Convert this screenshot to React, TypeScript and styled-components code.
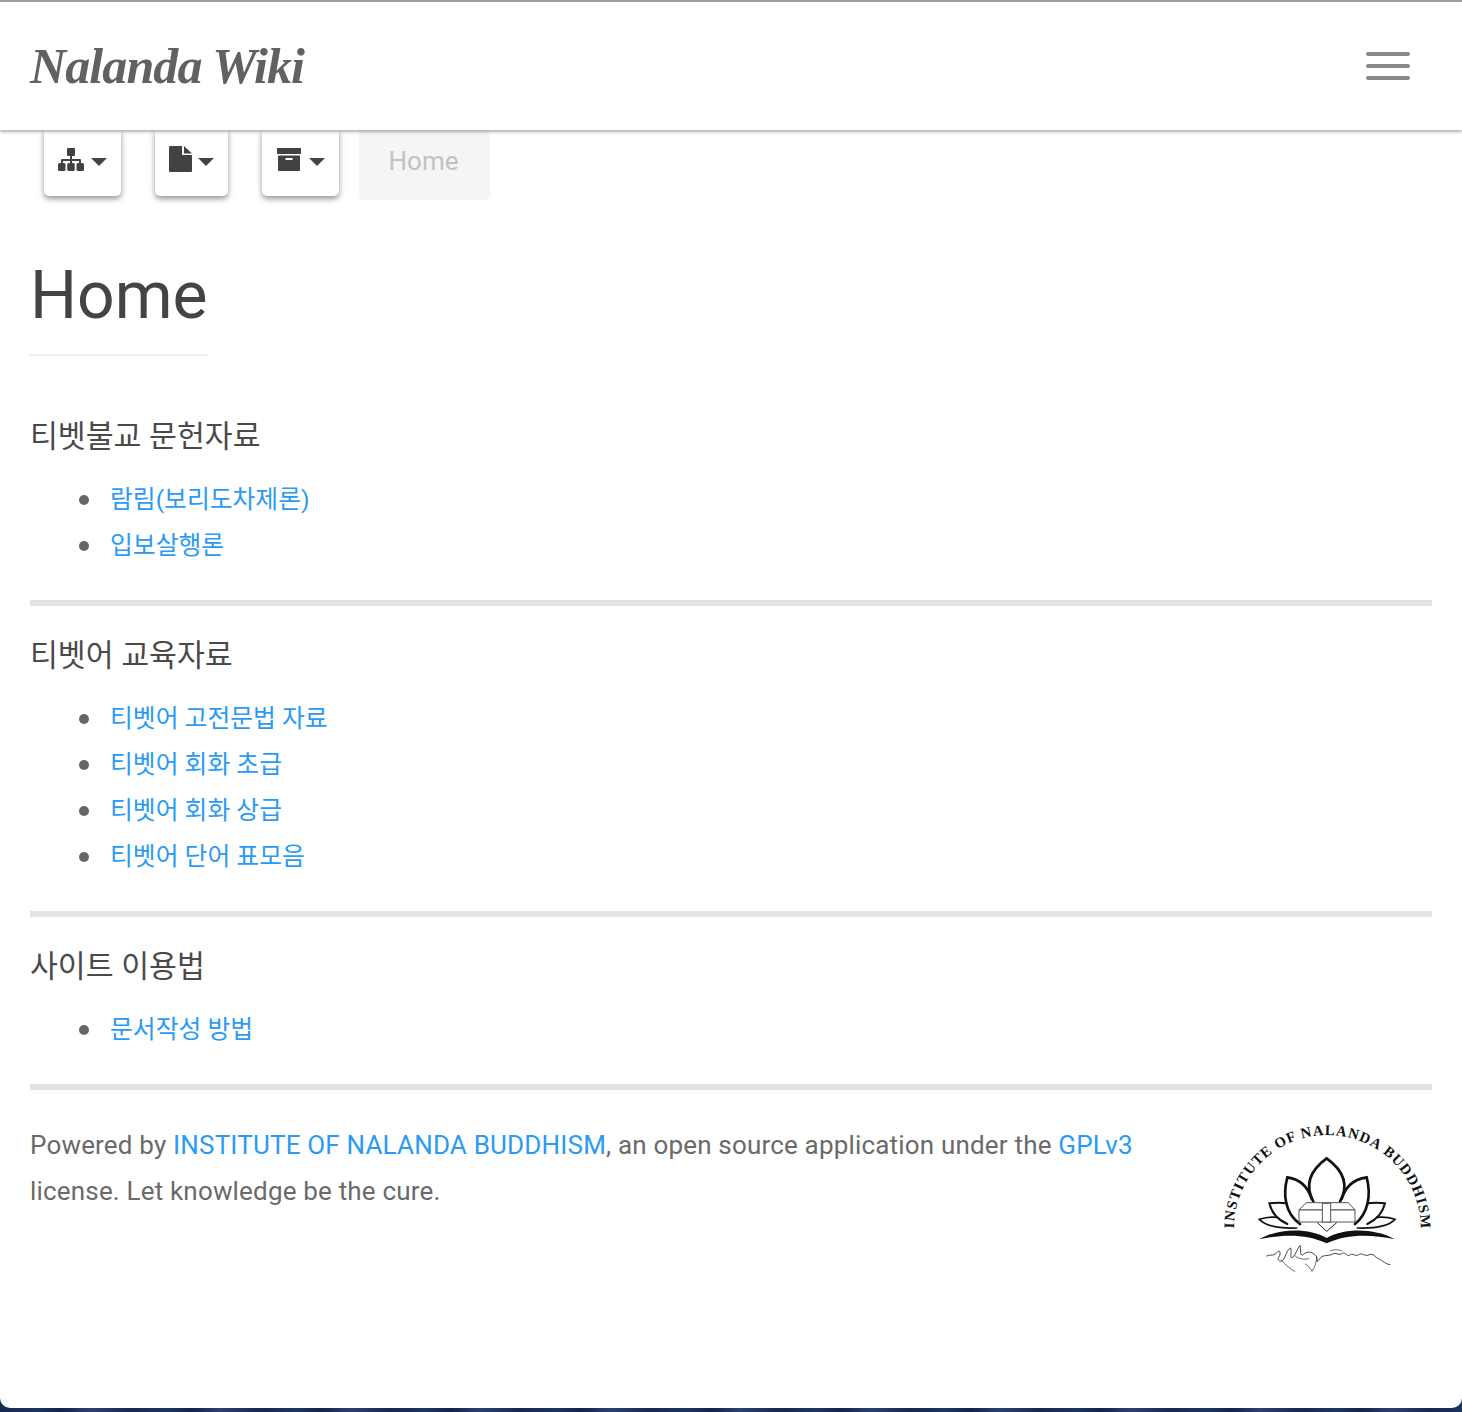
import React from "react";
import styled, { createGlobalStyle } from "styled-components";

const GlobalStyle = createGlobalStyle`
  html, body {
    margin: 0;
    padding: 0;
  }
  body {
    background: repeating-linear-gradient(90deg, #15294f 0, #1d3560 37px, #12244a 61px, #2a4070 90px, #15294f 130px);
    font-family: Roboto, "Noto Sans CJK KR", sans-serif;
    color: #666;
  }
`;

const Page = styled.div`
  height: 1408px;
  background: #fff;
  border-radius: 0 0 10px 10px;
  overflow: hidden;
`;

const TopBar = styled.header`
  position: relative;
  z-index: 2;
  height: 128px;
  background: #fff;
  border-top: 2px solid #9e9e9e;
  box-shadow: 0 2px 3px rgba(0, 0, 0, 0.3);
  display: flex;
  align-items: center;
  justify-content: space-between;
  padding: 0 52px 0 30px;
`;

const Brand = styled.a`
  font-family: "Liberation Serif", serif;
  font-style: italic;
  font-weight: 700;
  font-size: 50px;
  letter-spacing: -0.9px;
  color: #616161;
`;

const Burger = styled.button`
  width: 44px;
  display: flex;
  flex-direction: column;
  gap: 8px;
  padding: 0;
  border: 0;
  background: none;
`;

const BurgerLine = styled.span`
  display: block;
  height: 4px;
  border-radius: 2px;
  background: #888;
`;

const Toolbar = styled.nav`
  display: flex;
  align-items: flex-start;
  gap: 34px;
  padding-left: 44px;
  height: 70px;
`;

const ToolButton = styled.button<{ $w: number; $gap: number }>`
  width: ${(p) => p.$w}px;
  height: 66px;
  border: 0;
  padding: 0 0 8px;
  background: #fff;
  border-radius: 0 0 5px 5px;
  box-shadow: 0 3px 5px rgba(0, 0, 0, 0.32), 0 2px 10px rgba(0, 0, 0, 0.12);
  color: #424242;
  display: flex;
  align-items: center;
  justify-content: center;
  gap: ${(p) => p.$gap}px;
`;

const Glyph = styled.svg`
  display: block;
  fill: #424242;
  flex: none;
`;

const Caret = styled.span`
  width: 0;
  height: 0;
  margin-top: 6px;
  border-left: 8px solid transparent;
  border-right: 8px solid transparent;
  border-top: 8px solid #424242;
`;

const Crumb = styled.div`
  margin-left: -14px;
  width: 131px;
  height: 70px;
  box-sizing: border-box;
  padding: 0 2px 8px 0;
  background: #f5f5f5;
  border-radius: 0 0 5px 5px;
  color: #c2c2c2;
  font-size: 26px;
  display: flex;
  align-items: center;
  justify-content: center;
`;

const Content = styled.main`
  padding: 0 30px;
`;

const Title = styled.h1`
  display: inline-block;
  margin: 56px 0 0;
  padding-bottom: 18px;
  font-size: 66px;
  line-height: 80px;
  font-weight: 400;
  color: #444;
  border-bottom: 2px solid #eee;
`;

const Section = styled.section<{ $first?: boolean }>`
  padding-top: ${(p) => (p.$first ? 61 : 30)}px;
  border-bottom: 6px solid #e3e3e3;
`;

const Heading = styled.h2`
  margin: 0;
  font-size: 30.3px;
  line-height: 40px;
  font-weight: 400;
  color: #4a4a4a;
`;

const LinkList = styled.ul`
  margin: 20px 0 31px;
  padding: 0 0 0 49px;
  list-style: none;
`;

const LinkItem = styled.li`
  display: flex;
  align-items: center;
  gap: 21px;
  font-size: 24.8px;
  line-height: 46px;
  &::before {
    content: "";
    width: 10px;
    height: 10px;
    border-radius: 50%;
    background: #666;
    flex: none;
  }
`;

const Anchor = styled.a`
  color: #2b9af3;
  text-decoration: none;
`;

const Footer = styled.footer`
  display: flex;
  justify-content: space-between;
  align-items: flex-start;
  padding-top: 32px;
`;

const FooterText = styled.p`
  margin: 0;
  width: 1120px;
  font-size: 26px;
  letter-spacing: 0.18px;
  line-height: 46px;
  color: #6a6a6a;
`;

const LogoMark = styled.svg`
  width: 220px;
  height: 160px;
  margin: -4px -5px 0 0;
  flex: none;
`;

const sections = [
  { title: "티벳불교 문헌자료", links: ["람림(보리도차제론)", "입보살행론"] },
  {
    title: "티벳어 교육자료",
    links: ["티벳어 고전문법 자료", "티벳어 회화 초급", "티벳어 회화 상급", "티벳어 단어 표모음"],
  },
  { title: "사이트 이용법", links: ["문서작성 방법"] },
];

const SitemapIcon = () => (
  <Glyph width="26" height="23" viewBox="0 0 26 23">
    <rect x="9" y="0" width="8" height="8" rx="1" />
    <rect x="12" y="7" width="2" height="8" />
    <path d="M3 15v-3a1 1 0 0 1 1-1h18a1 1 0 0 1 1 1v3h-2v-2H5v2z" />
    <rect x="0" y="15" width="7.5" height="8" rx="1.5" />
    <rect x="9.25" y="15" width="7.5" height="8" rx="1.5" />
    <rect x="18.5" y="15" width="7.5" height="8" rx="1.5" />
  </Glyph>
);

const FileIcon = () => (
  <Glyph width="23" height="26" viewBox="0 0 23 26">
    <path d="M1 0H13V9H23V25a1 1 0 0 1-1 1H1a1 1 0 0 1-1-1V1a1 1 0 0 1 1-1z" />
    <path d="M15 0L23 7.5H15z" />
  </Glyph>
);

const ArchiveIcon = () => (
  <Glyph width="24" height="23" viewBox="0 0 24 23">
    <rect x="0" y="0" width="24" height="6" rx="0.5" />
    <path fillRule="evenodd" d="M1 7.5H23V22a1 1 0 0 1-1 1H2a1 1 0 0 1-1-1zM8.5 10v2h7v-2z" />
  </Glyph>
);

const Logo = () => (
  <LogoMark viewBox="51 54 660 480">
    <defs>
      <path id="logoArc" d="M102 385 A280 280 0 0 1 662 385" />
    </defs>
    <text fontFamily='"Liberation Serif", serif' fontWeight="700" fontSize="44" fill="#111">
      <textPath href="#logoArc" textLength="880" lengthAdjust="spacing">
        INSTITUTE OF NALANDA BUDDHISM
      </textPath>
    </text>
    <g fill="none" stroke="#111" strokeWidth="8" strokeLinecap="round">
      <path d="M340 305 C316 260 325 215 380 175 C435 215 445 260 420 305" />
      <path d="M335 297 C325 262 300 238 262 232 C248 285 255 340 300 372" />
      <path d="M425 297 C435 262 460 238 500 232 C514 285 505 340 465 372" />
      <path d="M260 310 C245 308 225 308 208 310 C215 340 235 360 262 372" strokeWidth="6" />
      <path d="M502 310 C518 308 538 308 555 310 C548 340 528 360 502 372" strokeWidth="6" />
      <path d="M232 352 C215 350 195 352 178 358 C195 376 230 386 290 384" strokeWidth="5" />
      <path d="M530 352 C548 350 568 352 585 358 C568 376 532 386 472 384" strokeWidth="5" />
    </g>
    <g fill="#fff" stroke="#555" strokeWidth="3">
      <path d="M297 330 L318 308 H445 L465 330 Z" />
      <rect x="297" y="330" width="168" height="36" />
      <rect x="367" y="310" width="25" height="56" />
      <path d="M352 368 L380 394 L410 368" fill="none" stroke="#222" />
    </g>
    <path d="M178 418 C240 382 330 385 380 414 C430 385 520 382 585 418 C510 402 440 402 380 430 C320 402 250 402 178 418 Z" fill="#111" />
    {/* calligraphy under the lotus */}
    <g fill="none" stroke="#222" strokeWidth="2.5" strokeLinecap="round">
      <path d="M200 468 C212 462 222 470 232 456 C240 446 244 462 236 472 C230 482 244 490 252 476 C260 460 264 446 272 444 C276 460 268 478 278 472 C288 462 292 446 300 436 C304 452 298 474 312 462 C322 452 340 456 350 470 C354 480 346 494 358 478 C366 462 384 470 398 462 C408 456 414 466 424 462 C434 452 440 470 448 466 C458 456 466 472 476 464 C486 456 496 472 508 464 C520 458 524 472 536 476 C548 482 558 494 570 494" />
      <path d="M244 480 C256 496 270 506 284 514" strokeWidth="2" />
      <path d="M350 470 C350 488 344 502 336 514 C330 504 324 496 316 492" strokeWidth="2" />
      <path d="M286 468 C296 476 310 480 326 476 M392 452 C402 448 412 448 424 452" strokeWidth="2" />
    </g>
  </LogoMark>
);

export default function App() {
  return (
    <>
      <GlobalStyle />
      <Page>
        <TopBar>
          <Brand>Nalanda Wiki</Brand>
          <Burger aria-label="menu">
            <BurgerLine />
            <BurgerLine />
            <BurgerLine />
          </Burger>
        </TopBar>
        <Toolbar>
          <ToolButton $w={77} $gap={7}>
            <SitemapIcon />
            <Caret />
          </ToolButton>
          <ToolButton $w={73} $gap={6}>
            <FileIcon />
            <Caret />
          </ToolButton>
          <ToolButton $w={77} $gap={8}>
            <ArchiveIcon />
            <Caret />
          </ToolButton>
          <Crumb>Home</Crumb>
        </Toolbar>
        <Content>
          <Title>Home</Title>
          {sections.map((s, i) => (
            <Section key={s.title} $first={i === 0}>
              <Heading>{s.title}</Heading>
              <LinkList>
                {s.links.map((l) => (
                  <LinkItem key={l}>
                    <Anchor href="#">{l}</Anchor>
                  </LinkItem>
                ))}
              </LinkList>
            </Section>
          ))}
          <Footer>
            <FooterText>
              Powered by <Anchor href="#">INSTITUTE OF NALANDA BUDDHISM</Anchor>, an open source application under the{" "}
              <Anchor href="#">GPLv3</Anchor> license. Let knowledge be the cure.
            </FooterText>
            <Logo />
          </Footer>
        </Content>
      </Page>
    </>
  );
}
